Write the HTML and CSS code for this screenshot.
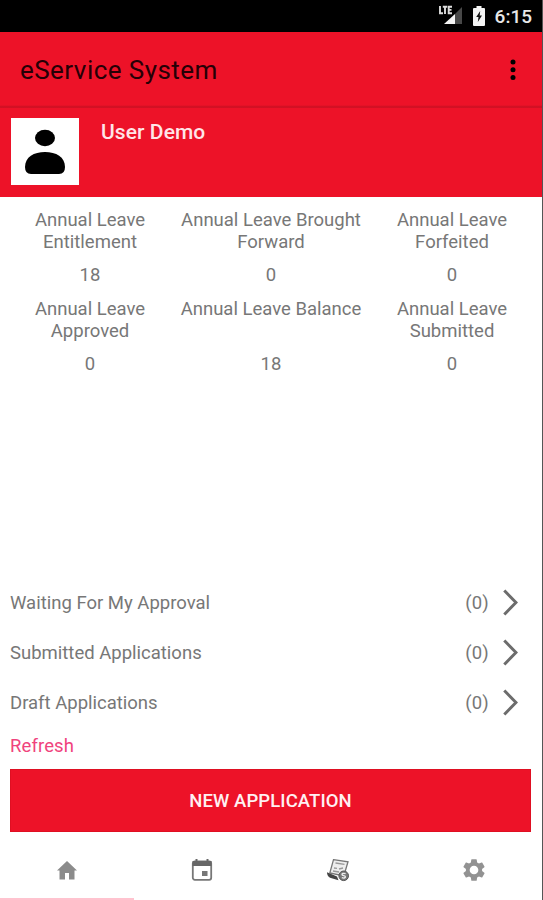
FILE: index.html
```html
<!DOCTYPE html>
<html lang="en">
<head>
<meta charset="utf-8">
<title>eService System</title>
<link rel="stylesheet" href="styles.css">
</head>
<body>
<div class="screen">
  <div class="status">
    <svg class="signal" width="26" height="22" viewBox="0 0 26 22">
      <path d="M24 2V19H17V9Z" fill="#484848"/>
      <path d="M17 9V19H6Z" fill="#f4f4f4"/>
      <path d="M2 1V8.2H5M4.8 1.7H9.2M7 1.7V9M14 1.7H10.7V8.2H14M10.7 4.9H13.5" fill="none" stroke="#ddd" stroke-width="1.9"/>
    </svg>
    <svg class="battery" width="12" height="20" viewBox="0 0 12 20">
      <path d="M3.5 0H8.5V2H11Q12 2 12 3V19Q12 20 11 20H1Q0 20 0 19V3Q0 2 1 2H3.5Z" fill="#f4f4f4"/>
      <path d="M7.2 5L3.2 11H5.5L4.8 16L9 9.5H6.7Z" fill="#111"/>
    </svg>
    <span class="clock">6:15</span>
  </div>
  <header class="appbar">
    <h1>eService System</h1>
    <svg width="8" height="22" viewBox="0 0 8 22"><circle cx="4" cy="3" r="2.5"/><circle cx="4" cy="10.7" r="2.5"/><circle cx="4" cy="18.4" r="2.5"/></svg>
  </header>
  <section class="profile">
    <div class="avatar">
      <svg width="68" height="67" viewBox="0 0 68 67"><ellipse cx="34" cy="20" rx="10" ry="8.3"/><path d="M14 49C14 39 23 34 34 34S54 39 54 49Q54 56 48 56H20Q14 56 14 49Z"/></svg>
    </div>
    <span class="name">User Demo</span>
  </section>
  <section class="leave">
    <div class="cell"><p>Annual Leave<br>Entitlement</p><b>18</b></div>
    <div class="cell"><p>Annual Leave Brought<br>Forward</p><b>0</b></div>
    <div class="cell"><p>Annual Leave<br>Forfeited</p><b>0</b></div>
    <div class="cell"><p>Annual Leave<br>Approved</p><b>0</b></div>
    <div class="cell"><p>Annual Leave Balance</p><b>18</b></div>
    <div class="cell"><p>Annual Leave<br>Submitted</p><b>0</b></div>
  </section>
  <section class="list">
    <div class="row"><span>Waiting For My Approval</span><span class="count">(0)</span><svg width="16" height="28" viewBox="0 0 16 28"><path d="M2.3 1.5L14 13.5L2.3 25.5"/></svg></div>
    <div class="row"><span>Submitted Applications</span><span class="count">(0)</span><svg width="16" height="28" viewBox="0 0 16 28"><path d="M2.3 1.5L14 13.5L2.3 25.5"/></svg></div>
    <div class="row"><span>Draft Applications</span><span class="count">(0)</span><svg width="16" height="28" viewBox="0 0 16 28"><path d="M2.3 1.5L14 13.5L2.3 25.5"/></svg></div>
  </section>
  <a class="refresh">Refresh</a>
  <button class="new"><span>NEW APPLICATION</span></button>
  <nav class="tabs">
    <div class="tab active"><svg width="24" height="24" viewBox="0 0 24 24"><path d="M10 21.5V15H14V21.5H19.5V12.5H22L12 3L2 12.5H4.5V21.5Z" fill="#8b8b8b"/></svg></div>
    <div class="tab"><svg width="24" height="24" viewBox="0 0 24 24"><rect x="2.8" y="3.5" width="18.4" height="18.3" rx="2" fill="none" stroke="#777" stroke-width="1.8"/><path d="M2.5 3H21.5V8H2.5Z" fill="#666"/><path d="M6.5 1V5M17.5 1V5" stroke="#666" stroke-width="2"/><rect x="12" y="13" width="5.5" height="5" fill="#777"/></svg></div>
    <div class="tab"><svg width="24" height="24" viewBox="0 0 24 24"><path d="M7.5 1.7L22 3.8L17.8 18L3.8 15Z" fill="#eee" stroke="#777" stroke-width="1.3"/><path d="M9.5 5L18.5 6.4M8 10L11 10.4M13 11L17 10M7 13L13 14" stroke="#999" stroke-width="1.3"/><path d="M1 14.3L11 18.5L12.5 22.3L4 19.8Q1 18 1 14.3Z" fill="#444"/><circle cx="17.7" cy="17.8" r="4.8" fill="#777" stroke="#555"/><path d="M19.6 15.7Q15.7 14.8 16 16.7C16.2 18 19.6 17.4 19.4 19Q18.9 20.7 15.8 19.6" fill="none" stroke="#eee" stroke-width="1.3"/></svg></div>
    <div class="tab"><svg width="26" height="26" viewBox="0 0 24 24"><path fill="#929292" d="M19.43 12.98c.04-.32.07-.64.07-.98s-.03-.66-.07-.98l2.11-1.65c.19-.15.24-.42.12-.64l-2-3.46c-.12-.22-.39-.3-.61-.22l-2.49 1c-.52-.4-1.08-.73-1.69-.98l-.38-2.65C14.46 2.18 14.25 2 14 2h-4c-.25 0-.46.18-.49.42l-.38 2.65c-.61.25-1.17.59-1.69.98l-2.49-1c-.23-.09-.49 0-.61.22l-2 3.46c-.13.22-.07.49.12.64l2.11 1.65c-.04.32-.07.65-.07.98s.03.66.07.98l-2.11 1.65c-.19.15-.24.42-.12.64l2 3.46c.12.22.39.3.61.22l2.49-1c.52.4 1.08.73 1.69.98l.38 2.65c.03.24.24.42.49.42h4c.25 0 .46-.18.49-.42l.38-2.65c.61-.25 1.17-.59 1.69-.98l2.49 1c.23.09.49 0 .61-.22l2-3.46c.12-.22.07-.49-.12-.64zM12 16a4 4 0 1 1 0-8 4 4 0 0 1 0 8z"/></svg></div>
  </nav>
</div>
</body>
</html>
```
FILE: styles.css
```css
* { box-sizing: border-box; margin: 0; padding: 0; }
body { background: #fff; font-family: Roboto, "Liberation Sans", sans-serif; color: #777; }
.screen { width: 543px; height: 900px; display: flex; flex-direction: column; border-right: 1px solid #555; overflow: hidden; }
.status { height: 32px; flex: none; background: #000; display: flex; align-items: center; justify-content: flex-end; padding-right: 10px; color: #e8e8e8; }
.signal { margin-right: 9px; }
.battery { margin-right: 10px; }
.clock { font-size: 19px; font-weight: 500; line-height: 32px; padding-top: 2px; }
.appbar { height: 76px; flex: none; background: linear-gradient(#ed1228 73px, #c91022 75px, #db1125 76px); display: flex; align-items: center; justify-content: space-between; padding: 0 25px 0 20px; }
.appbar h1 { font-size: 26px; font-weight: 400; line-height: 30px; color: #260006; letter-spacing: .45px; }
.profile { height: 89px; flex: none; background: #ed1228; display: flex; padding: 10px 11px; gap: 22px; }
.avatar { width: 68px; height: 67px; background: #fff; }
.avatar svg { display: block; }
.name { font-size: 21px; font-weight: 500; line-height: 26px; color: #ffe5e8; padding-top: 1px; letter-spacing: .08px; }
.leave { display: grid; grid-template-columns: repeat(3, 181px); justify-content: center; grid-auto-rows: 89px; padding-top: 12px; height: 378px; text-align: center; font-size: 18.5px; line-height: 22px; flex: none; }
.cell { display: flex; flex-direction: column; justify-content: space-between; height: 77px; white-space: nowrap; }
.cell b { font-weight: 400; }
.list { flex: none; padding: 3px 24px 0 10px; }
.row { height: 50.2px; display: flex; align-items: center; font-size: 18.5px; }
.row .count { margin-left: auto; margin-right: 13px; letter-spacing: .2px; }
.row svg { fill: none; stroke: #6c6c6c; stroke-width: 3; }
.refresh { flex: none; color: #f0437d; font-size: 18.5px; line-height: 22px; letter-spacing: .1px; padding-left: 10px; margin-top: 6px; }
.new { flex: none; margin: 12px 11px 0 10px; height: 63px; padding-top: 2px; border: 1px solid #df0f22; background: #ed1228; color: #fff0f2; font: 500 18.5px Roboto, sans-serif; letter-spacing: .1px; }
.tabs { flex: 1; display: grid; grid-template-columns: 134px 136px 136px 136px; }
.tab { display: flex; align-items: center; justify-content: center; padding-top: 8px; }
.tab.active { border-bottom: 2px solid #ffc3cf; padding-top: 10px; }
```
